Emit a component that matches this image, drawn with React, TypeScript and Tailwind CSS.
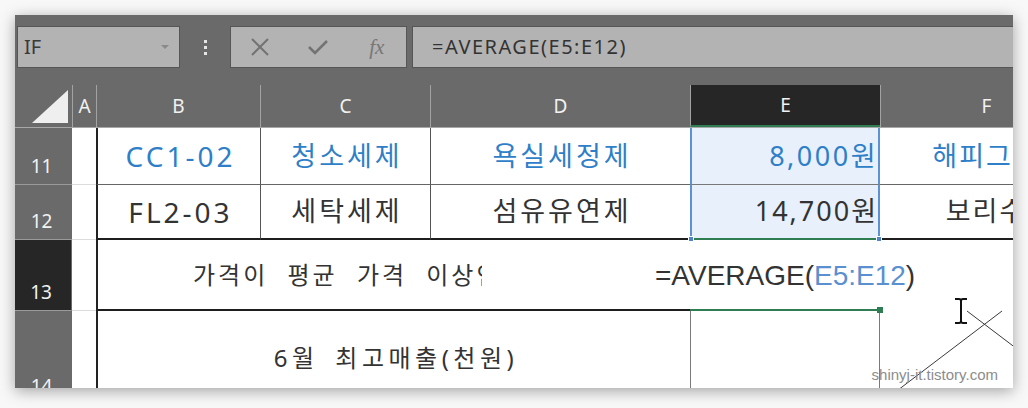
import React from "react";

const KR = "font-['Noto_Sans','Noto_Sans_CJK_KR',sans-serif]";
const UI = "font-['Noto_Sans','Open_Sans',sans-serif]";

function RowHead({ n, active = false }: { n: string; active?: boolean }) {
  return (
    <div
      className={`w-[57px] shrink-0 flex items-end justify-center pr-[4px] pb-[8px] text-[19px] leading-none text-[#f2f2f2] ${UI} border-b border-[#9a9a9a] ${
        active ? "bg-[#262626] border-r border-r-[#2f8a57]" : "bg-[#6a6a6a]"
      }`}
    >
      {n}
    </div>
  );
}

function ColHead({ label, w, active = false }: { label: string; w: string; active?: boolean }) {
  return (
    <div
      className={`${w} shrink-0 h-full flex items-center justify-center border-l border-[#a3a3a3] text-[19px] text-[#f2f2f2] ${UI} ${
        active ? "bg-[#262626] border-b-2 border-b-[#2f7d52]" : ""
      }`}
    >
      {label}
    </div>
  );
}

export default function App() {
  return (
    <div className="w-[1028px] h-[408px] bg-[#f8f8f8] pt-[15px] pl-[15px]">
      <div className="relative w-[998px] h-[373px] overflow-hidden bg-[#6a6a6a] shadow-[0_3px_14px_rgba(0,0,0,0.35)] flex flex-col">
        {/* formula bar */}
        <div className="flex h-[42px] mt-[11px] shrink-0">
          <div className="ml-[2px] w-[163px] shrink-0 bg-[#b3b3b3] border border-[#565656] flex items-center justify-between pl-[6px] pr-[10px]">
            <span className={`text-[20px] text-[#3a3a3a] ${UI}`}>IF</span>
            <svg width="8" height="5" viewBox="0 0 8 5">
              <path d="M0 0 L8 0 L4 4 Z" fill="#8a8a8a" />
            </svg>
          </div>
          <div className="w-[50px] shrink-0 flex flex-col items-center justify-center gap-[3px]">
            <div className="w-[3px] h-[3px] bg-[#e6e6e6]" />
            <div className="w-[3px] h-[3px] bg-[#e6e6e6]" />
            <div className="w-[3px] h-[3px] bg-[#e6e6e6]" />
          </div>
          <div className="w-[177px] shrink-0 bg-[#b3b3b3] border border-[#565656] flex items-center">
            <div className="w-[59px] flex justify-center">
              <svg width="20" height="18" viewBox="0 0 20 18">
                <path d="M2 1 L18 17 M18 1 L2 17" stroke="#737373" strokeWidth="2" fill="none" />
              </svg>
            </div>
            <div className="w-[59px] flex justify-center">
              <svg width="22" height="18" viewBox="0 0 22 18">
                <path d="M2 9 L8 15 L20 3" stroke="#737373" strokeWidth="2.6" fill="none" />
              </svg>
            </div>
            <div className="w-[59px] flex justify-center">
              <span className="font-['Liberation_Serif',serif] italic text-[21px] text-[#777] leading-none">fx</span>
            </div>
          </div>
          <div className="ml-[5px] flex-1 bg-[#b3b3b3] border-y border-l border-[#565656] flex items-center pl-[19px]">
            <span className={`text-[20px] tracking-[1.5px] text-[#333] ${UI}`}>=AVERAGE(E5:E12)</span>
          </div>
        </div>
        <div className="h-[17px] shrink-0" />

        {/* column header */}
        <div className="flex h-[43px] shrink-0 border-b border-[#a8a8a8]">
          <div className="w-[57px] shrink-0 h-full flex items-end justify-end pr-[4px] pb-[4px]">
            <svg width="36" height="33" viewBox="0 0 36 33">
              <polygon points="0,33 36,33 36,0" fill="#efefef" />
            </svg>
          </div>
          <ColHead label="A" w="w-[24px]" />
          <ColHead label="B" w="w-[164px]" />
          <ColHead label="C" w="w-[170px]" />
          <ColHead label="D" w="w-[260px]" />
          <ColHead label="E" w="w-[190px]" active />
          <ColHead label="F" w="w-[212px]" />
        </div>

        {/* row 11 */}
        <div className="flex h-[57px] shrink-0">
          <RowHead n="11" />
          <div className={`flex flex-1 bg-white text-[27px] tracking-[3px] text-[#2e7fc8] ${KR}`}>
            <div className="w-[24px] shrink-0 border-b border-[#dcdcdc]" />
            <div className="w-[164px] shrink-0 border-l-2 border-l-[#222] border-b border-b-[#666] flex items-center justify-center text-[28px] tracking-[3px] pl-[3px]">CC1-02</div>
            <div className="w-[170px] shrink-0 border-l border-l-[#555] border-b border-b-[#666] flex items-center justify-center pl-[3px]">청소세제</div>
            <div className="w-[260px] shrink-0 border-l border-l-[#555] border-b border-b-[#666] flex items-center justify-center pl-[3px]">욕실세정제</div>
            <div className="w-[190px] shrink-0 bg-[#e8f0fb] border-x-2 border-x-[#5b92d6] border-b border-b-[#777] flex items-center justify-end pr-[0px] tracking-[2.5px]">8,000원</div>
            <div className="w-[212px] shrink-0 border-b border-b-[#666] flex items-center justify-center whitespace-nowrap tracking-[2px]">해피그린</div>
          </div>
        </div>

        {/* row 12 */}
        <div className="flex h-[55px] shrink-0">
          <RowHead n="12" />
          <div className={`relative flex flex-1 bg-white text-[27px] tracking-[3px] text-[#333] ${KR}`}>
            <div className="w-[24px] shrink-0 border-b border-[#dcdcdc]" />
            <div className="w-[164px] shrink-0 border-l-2 border-l-[#222] border-b-2 border-b-[#1e1e1e] flex items-center justify-center text-[28px] tracking-[3px] pl-[3px]">FL2-03</div>
            <div className="w-[170px] shrink-0 border-l border-l-[#555] border-b-2 border-b-[#1e1e1e] flex items-center justify-center pl-[3px]">세탁세제</div>
            <div className="w-[260px] shrink-0 border-l border-l-[#555] border-b-2 border-b-[#1e1e1e] flex items-center justify-center pl-[3px]">섬유유연제</div>
            <div className="relative w-[190px] shrink-0 bg-[#e8f0fb] border-x-2 border-x-[#5b92d6] border-b-2 border-b-[#2f7d52] flex items-center justify-end pr-[0px] tracking-[2px]">
              14,700원
              <div className="absolute -left-[4px] -bottom-[4px] w-[6px] h-[6px] bg-[#4f86c9] border border-white" />
              <div className="absolute -right-[4px] -bottom-[4px] w-[6px] h-[6px] bg-[#4f86c9] border border-white" />
            </div>
            <div className="w-[212px] shrink-0 border-b-2 border-b-[#1e1e1e] flex items-center justify-center whitespace-nowrap tracking-[2px]">보리수</div>
          </div>
        </div>

        {/* row 13 */}
        <div className="flex h-[71px] shrink-0">
          <RowHead n="13" active />
          <div className={`flex flex-1 bg-white text-[24px] tracking-[3px] text-[#333] ${KR}`}>
            <div className="w-[24px] shrink-0 border-b border-[#dcdcdc]" />
            <div className="w-[594px] shrink-0 border-l-2 border-l-[#222] border-b-2 border-b-[#1e1e1e] flex items-center pl-[95px]">
              <span className="w-[289px] shrink-0 overflow-hidden whitespace-nowrap [word-spacing:10px]">가격이 평균 가격 이상인</span>
              <span className="ml-[173px] shrink-0 whitespace-nowrap font-['Liberation_Sans',sans-serif] text-[28px] tracking-normal text-[#333] pt-[2px]">
                =AVERAGE(<span className="text-[#5a8fd0]">E5:E12</span>)
              </span>
            </div>
            <div className="relative w-[190px] shrink-0 border-b-2 border-b-[#2f7d52]">
              <div className="absolute -right-[3px] -bottom-[4px] w-[6px] h-[6px] bg-[#2f7d52]" />
            </div>
            <div className="w-[212px] shrink-0" />
          </div>
        </div>

        {/* row 14 */}
        <div className="flex h-[94px] shrink-0">
          <RowHead n="14" />
          <div className={`flex flex-1 bg-white text-[24px] tracking-[4.5px] text-[#333] ${KR}`}>
            <div className="w-[24px] shrink-0" />
            <div className="w-[594px] shrink-0 border-l-2 border-l-[#222] flex items-center justify-center pl-[4px] [word-spacing:6px]">6월 최고매출(천원)</div>
            <div className="w-[190px] shrink-0 border-x border-[#7a7a7a]" />
            <div className="w-[212px] shrink-0" />
          </div>
        </div>

        {/* diagonal lines drawn in F */}
        <svg className="absolute left-0 top-0 pointer-events-none" width="998" height="373" viewBox="0 0 998 373">
          <line x1="987" y1="296" x2="862" y2="391" stroke="#3a3a3a" strokeWidth="1" />
          <line x1="952" y1="296" x2="1010" y2="340" stroke="#3a3a3a" strokeWidth="1" />
        </svg>

        {/* I-beam cursor */}
        <svg className="absolute left-[938px] top-[282px] pointer-events-none" width="16" height="28" viewBox="0 0 16 28">
          <path d="M2 2 H6 Q8 2 8 4 V24 Q8 26 6 26 H2 M14 2 H10 Q8 2 8 4 M8 24 Q8 26 10 26 H14" stroke="#fff" strokeWidth="4" fill="none" />
          <path d="M2 2 H6 Q8 2 8 4 V24 Q8 26 6 26 H2 M14 2 H10 Q8 2 8 4 M8 24 Q8 26 10 26 H14" stroke="#111" strokeWidth="2" fill="none" />
        </svg>

        {/* watermark */}
        <div className="absolute right-[15px] bottom-[6px] font-['Liberation_Sans',sans-serif] text-[15px] leading-none text-[#8c8c8c]">
          shinyj-it.tistory.com
        </div>
      </div>
    </div>
  );
}
